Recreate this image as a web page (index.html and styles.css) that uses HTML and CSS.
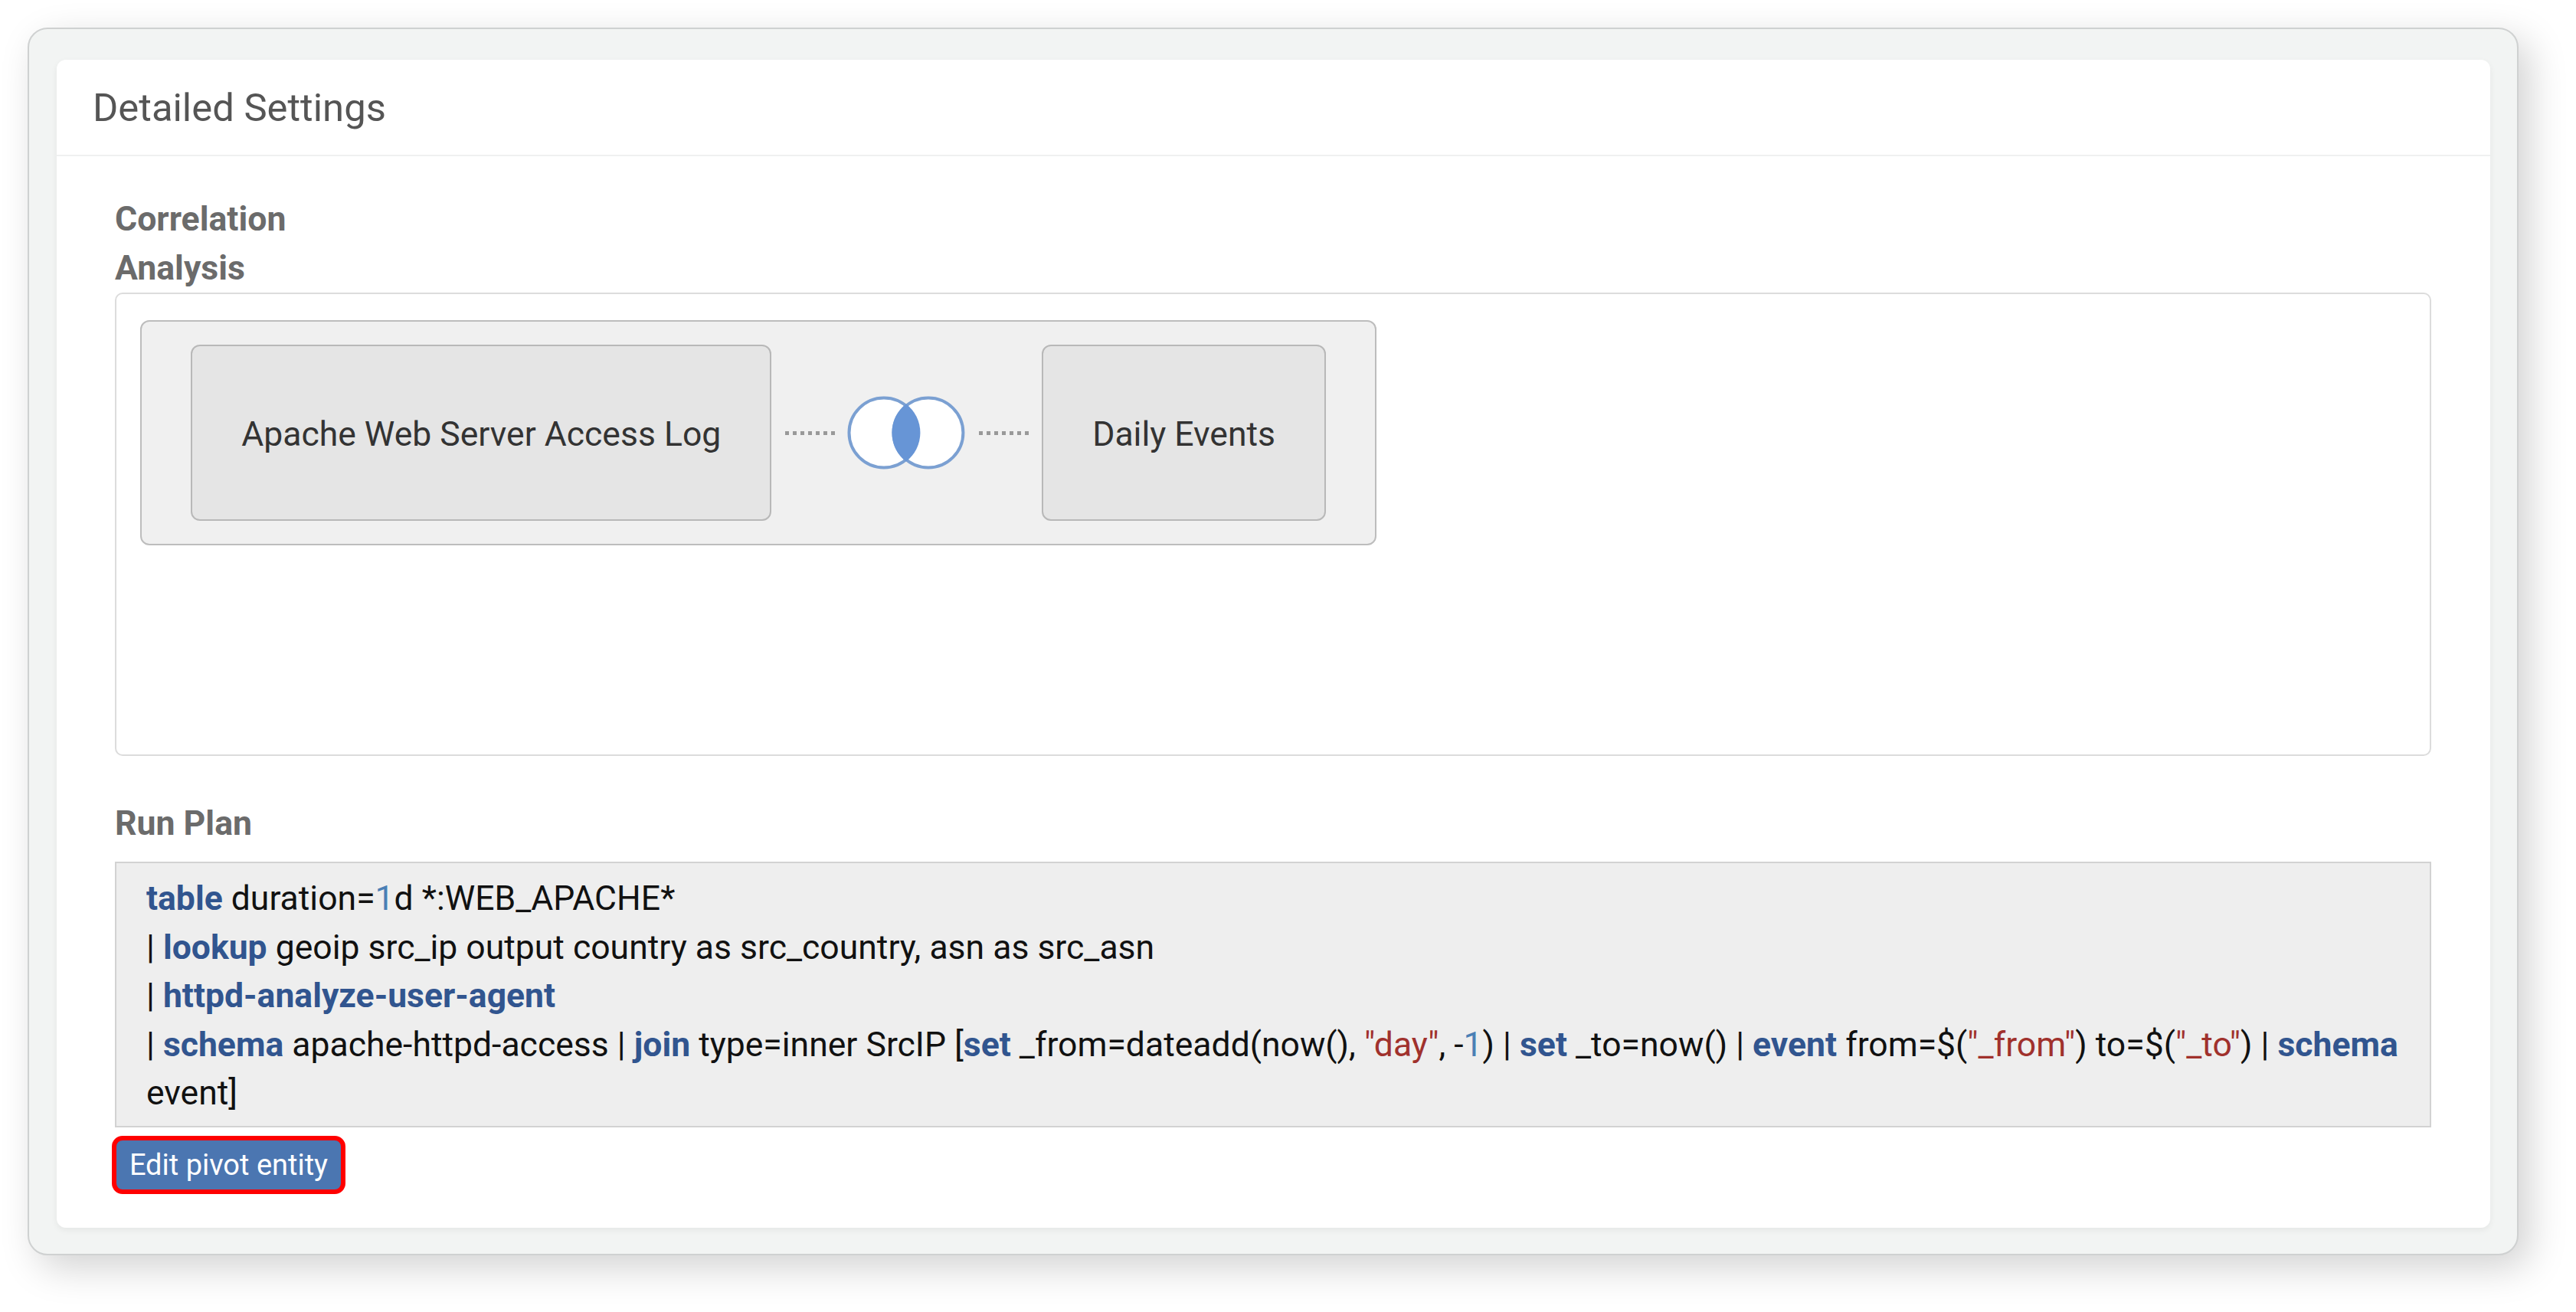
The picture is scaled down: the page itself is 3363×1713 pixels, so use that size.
FILE: index.html
```html
<!DOCTYPE html>
<html lang="en">
<head>
<meta charset="utf-8">
<title>Detailed Settings</title>
<link rel="stylesheet" href="styles.css">
</head>
<body>
<div class="frame">
  <section class="card">
    <header class="card-head">Detailed Settings</header>
    <div class="card-body">
      <h3 class="label label-narrow">Correlation Analysis</h3>
      <div class="diagram-box">
        <div class="diagram">
          <div class="node node-a">Apache Web Server Access Log</div>
          <div class="dots"></div>
          <svg class="venn" viewBox="0 0 154 100" aria-hidden="true">
            <circle class="venn-ring" cx="48" cy="50" r="45.500"/>
            <circle class="venn-ring" cx="106" cy="50" r="45.500"/>
            <path class="venn-mid" d="M77 12.400A47.500 47.500 0 0 1 77 87.600A47.500 47.500 0 0 1 77 12.400Z"/>
          </svg>
          <div class="dots"></div>
          <div class="node node-b">Daily Events</div>
        </div>
      </div>
      <h3 class="label label-plan">Run Plan</h3>
      <pre class="code"><b>table</b> duration=<i>1</i>d *:WEB_APACHE*
| <b>lookup</b> geoip src_ip output country as src_country, asn as src_asn
| <b>httpd-analyze-user-agent</b>
| <b>schema</b> apache-httpd-access | <b>join</b> type=inner SrcIP [<b>set</b> _from=dateadd(now(), <em>"day"</em>, -<i>1</i>) | <b>set</b> _to=now() | <b>event</b> from=$(<em>"_from"</em>) to=$(<em>"_to"</em>) | <b>schema</b> event]</pre>
      <button class="btn" type="button">Edit pivot entity</button>
    </div>
  </section>
</div>
</body>
</html>
```
FILE: styles.css
```css
* { box-sizing: border-box; }
html, body { margin: 0; height: 100%; background: #fff; overflow: hidden; }
body { padding: 36px 75px 74px 36px; font-family: Roboto, "Liberation Sans", sans-serif; }
.frame {
  height: 1603px;
  padding: 40px 35px 34px 36px;
  background: #f2f4f3;
  border: 2px solid #cfd1d1;
  border-radius: 26px;
  box-shadow: 14px 16px 50px rgba(0,0,0,.18);
}
.card {
  height: 100%;
  background: #fff;
  border-radius: 12px;
  box-shadow: 0 3px 8px rgba(0,0,0,.06);
}
.card-head {
  height: 126px;
  padding: 0 47px;
  display: flex;
  align-items: center;
  font-size: 50.800px;
  color: #555;
  border-bottom: 2px solid #eff0f0;
}
.card-body { padding: 50px 77px 0 76px; }
.label { margin: 0; font-size: 44.600px; line-height: 64px; font-weight: 700; color: #6b6b6b; }
.label-narrow { width: 300px; }
.label-plan { margin-top: 56px; }
.diagram-box {
  height: 605px;
  padding: 34px 31px;
  border: 2px solid #dcdcdc;
  border-radius: 10px;
}
.diagram {
  width: 1614px;
  height: 294px;
  padding: 30px 64px;
  display: flex;
  align-items: stretch;
  background: #f0f0f0;
  border: 2px solid #bdbdbd;
  border-radius: 12px;
}
.node {
  display: flex;
  align-items: center;
  justify-content: center;
  padding-top: 3px;
  font-size: 44.500px;
  color: #333;
  background: #e5e5e5;
  border: 2px solid #b8b8b8;
  border-radius: 12px;
}
.node-a { width: 759px; }
.node-b { width: 371px; }
.dots {
  width: 65px;
  margin: 0 17px 0 18px;
  align-self: center;
  height: 5px;
  background: repeating-linear-gradient(90deg, #999 0 5px, transparent 5px 10px);
}
.venn { width: 154px; height: 100px; margin: 0 0 0 -1px; align-self: center; }
.venn-ring { fill: #fff; stroke: #7ba0d2; stroke-width: 4; }
.venn-mid { fill: #6795d6; }
.code {
  margin: 18px 0 0;
  padding: 15px 38px 10px 39px;
  height: 347px;
  background: #eeeeee;
  border: 2px solid #d2d2d2;
  font-family: inherit;
  font-size: 44.500px;
  line-height: 63.500px;
  color: #111;
  white-space: pre-wrap;
}
.code b { color: #31558f; font-weight: 700; }
.code i { color: #4a7fb5; font-style: normal; }
.code em { color: #a0312c; font-style: normal; }
.btn {
  display: block;
  margin: 11px 0 0 -4px;
  width: 305px;
  height: 76px;
  padding: 0;
  background: #4b76b1;
  border: 6px solid #f00;
  border-radius: 14px;
  color: #fff;
  font-family: inherit;
  font-size: 38px;
}
```
